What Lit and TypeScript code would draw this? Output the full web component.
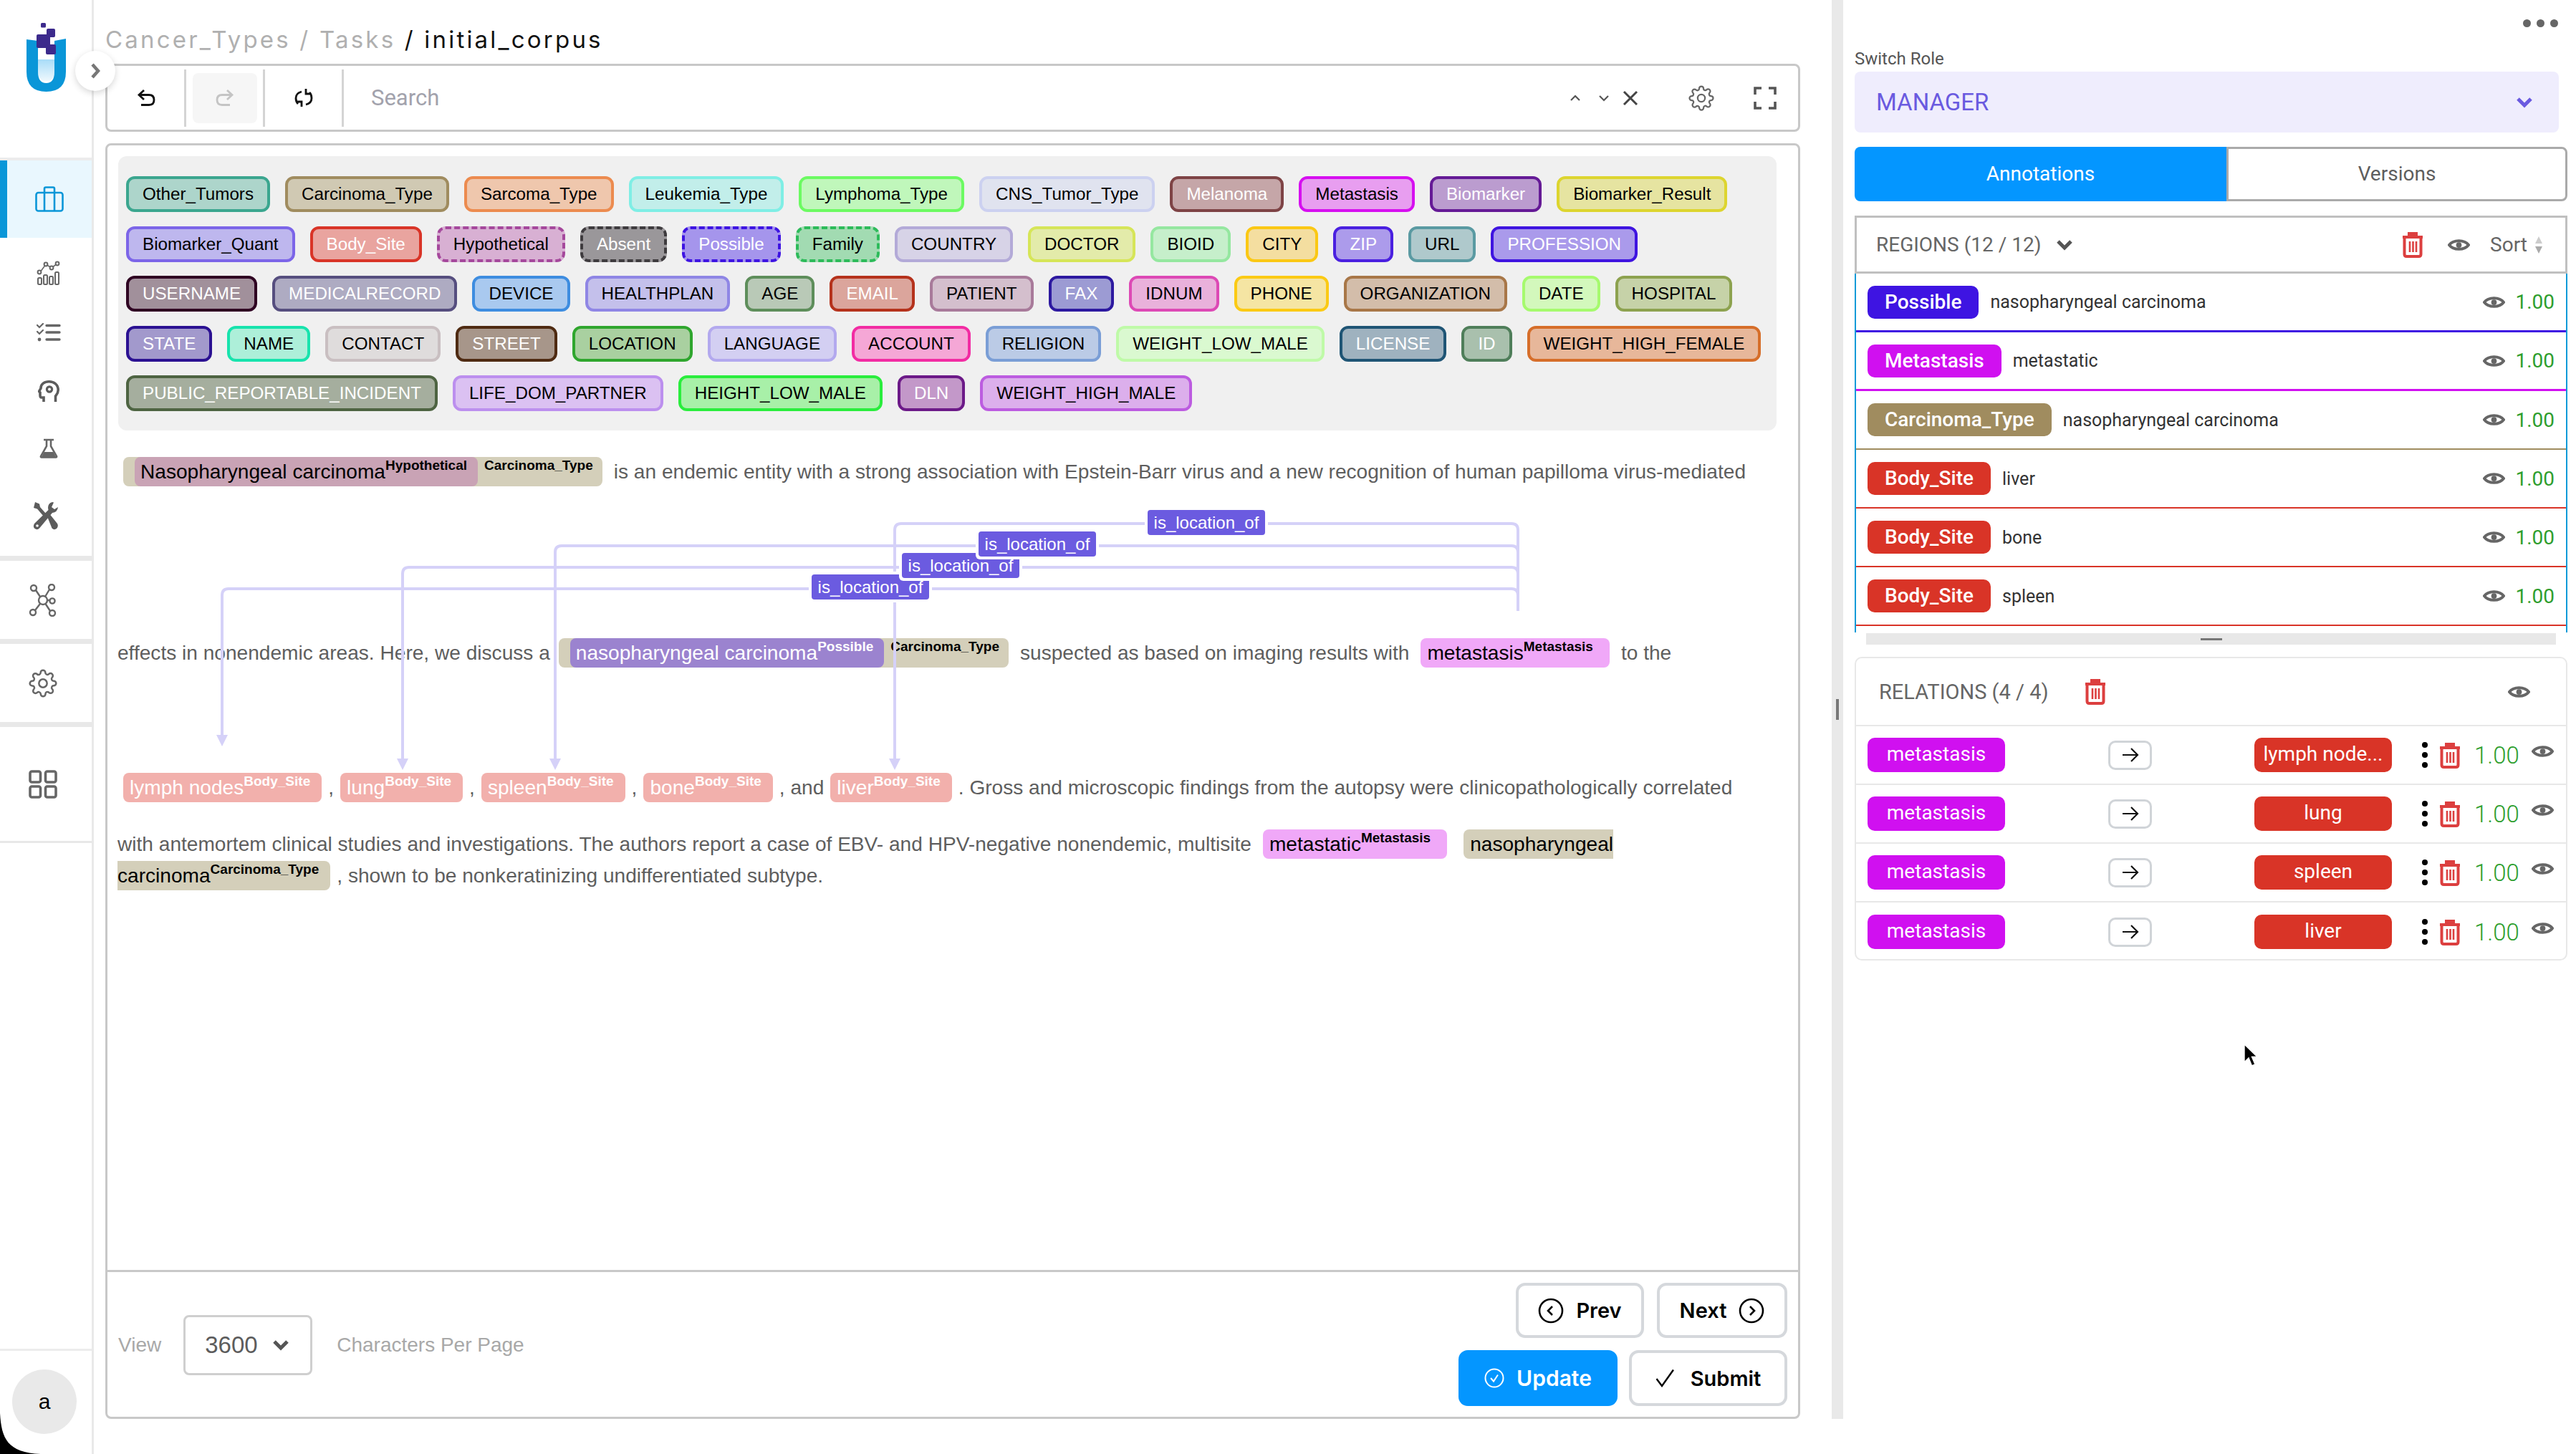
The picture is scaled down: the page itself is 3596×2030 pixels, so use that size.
import { LitElement, css, html, svg } from 'lit'
import { customElement } from 'lit/decorators.js'

// name, border, fill, text, dashed
type Lab = [string, string, string, string?, boolean?]
const W = '#fff'
const LABEL_ROWS: Lab[][] = [
  [
    ['Other_Tumors', '#3BA68F', '#ADD5CB'],
    ['Carcinoma_Type', '#A08C5F', '#D0C9B3'],
    ['Sarcoma_Type', '#EC8B4F', '#EFC7AD'],
    ['Leukemia_Type', '#7FEEE5', '#C2EEEA'],
    ['Lymphoma_Type', '#6CFA62', '#C0F7BB'],
    ['CNS_Tumor_Type', '#CCD1F0', '#E0E3EF'],
    ['Melanoma', '#7E4345', '#C5A6A8', W],
    ['Metastasis', '#D60FF0', '#E89EF0'],
    ['Biomarker', '#651A96', '#BB9CCF', W],
    ['Biomarker_Result', '#DDD52F', '#E6E4A1'],
  ],
  [
    ['Biomarker_Quant', '#7C65E8', '#BEB7EE'],
    ['Body_Site', '#D93427', '#E9A49F', W],
    ['Hypothetical', '#A5489C', '#D8B0D3', undefined, true],
    ['Absent', '#3E3B3E', '#9A979A', W, true],
    ['Possible', '#3E14E2', '#A595EC', W, true],
    ['Family', '#2DBB5A', '#A2DBB2', undefined, true],
    ['COUNTRY', '#B3AAD8', '#D7D3E7'],
    ['DOCTOR', '#D6E558', '#E3EBAA'],
    ['BIOID', '#95E7A0', '#C6EFCB'],
    ['CITY', '#FBC814', '#F4DEA0'],
    ['ZIP', '#4A20E0', '#AC9BEB', W],
    ['URL', '#5A9AA2', '#AFC9CC'],
    ['PROFESSION', '#3F14E0', '#AA9AEB', W],
  ],
  [
    ['USERNAME', '#2F0222', '#A1909B', W],
    ['MEDICALRECORD', '#564E7F', '#AEABC2', W],
    ['DEVICE', '#3E8DE0', '#A9C9EF'],
    ['HEALTHPLAN', '#8F86E5', '#C4C0EB'],
    ['AGE', '#5E8E5B', '#B9C9B7'],
    ['EMAIL', '#B5321C', '#DBA59C', W],
    ['PATIENT', '#A87A9A', '#D4BFCD'],
    ['FAX', '#2D19A0', '#9C9BD3', W],
    ['IDNUM', '#DD49B5', '#E9B1DB'],
    ['PHONE', '#FBCA14', '#F5E5A3'],
    ['ORGANIZATION', '#A87748', '#D3BDAA'],
    ['DATE', '#A6FA6E', '#D3F8BC'],
    ['HOSPITAL', '#8DA24F', '#C6D2A8'],
  ],
  [
    ['STATE', '#2B1192', '#A299CC', W],
    ['NAME', '#18E3AD', '#ADEFD9'],
    ['CONTACT', '#C9BFC1', '#DFDCDC'],
    ['STREET', '#4F2B12', '#A7968A', W],
    ['LOCATION', '#2FA62E', '#A9D0A0'],
    ['LANGUAGE', '#B3A9EE', '#D3CFF2'],
    ['ACCOUNT', '#F22CA3', '#F5A7D6'],
    ['RELIGION', '#7A9ED6', '#BBCBE6'],
    ['WEIGHT_LOW_MALE', '#BFFAA8', '#DAF9D0'],
    ['LICENSE', '#1F5575', '#9FB2BF', W],
    ['ID', '#4F7E5A', '#A9C0AD', W],
    ['WEIGHT_HIGH_FEMALE', '#D66E2A', '#E7B79A'],
  ],
  [
    ['PUBLIC_REPORTABLE_INCIDENT', '#4E6442', '#A5AE9E', W],
    ['LIFE_DOM_PARTNER', '#BC8FEE', '#DBC1F2'],
    ['HEIGHT_LOW_MALE', '#2AED3D', '#A8F0A8'],
    ['DLN', '#6C1A88', '#C398C9', W],
    ['WEIGHT_HIGH_MALE', '#BC5CE0', '#DCAFEC'],
  ],
]

const REGIONS = [
  ['Possible', 'nasopharyngeal carcinoma', '#3E14E2', 'thick'],
  ['Metastasis', 'metastatic', '#D010F0', 'thick'],
  ['Carcinoma_Type', 'nasopharyngeal carcinoma', '#A08C5F', ''],
  ['Body_Site', 'liver', '#D93427', ''],
  ['Body_Site', 'bone', '#D93427', ''],
  ['Body_Site', 'spleen', '#D93427', ''],
]
const RELATIONS = ['lymph node...', 'lung', 'spleen', 'liver']

const GEAR =
  'M19.4 15a1.65 1.65 0 0 0 .33 1.82l.06.06a2 2 0 0 1 0 2.83 2 2 0 0 1-2.83 0l-.06-.06a1.65 1.65 0 0 0-1.82-.33 1.65 1.65 0 0 0-1 1.51V21a2 2 0 0 1-2 2 2 2 0 0 1-2-2v-.09A1.65 1.65 0 0 0 9 19.4a1.65 1.65 0 0 0-1.82.33l-.06.06a2 2 0 0 1-2.83 0 2 2 0 0 1 0-2.83l.06-.06a1.65 1.65 0 0 0 .33-1.82 1.65 1.65 0 0 0-1.51-1H3a2 2 0 0 1-2-2 2 2 0 0 1 2-2h.09A1.65 1.65 0 0 0 4.6 9a1.65 1.65 0 0 0-.33-1.82l-.06-.06a2 2 0 0 1 0-2.83 2 2 0 0 1 2.83 0l.06.06a1.65 1.65 0 0 0 1.82.33H9a1.65 1.65 0 0 0 1-1.51V3a2 2 0 0 1 2-2 2 2 0 0 1 2 2v.09a1.65 1.65 0 0 0 1 1.51 1.65 1.65 0 0 0 1.82-.33l.06-.06a2 2 0 0 1 2.83 0 2 2 0 0 1 0 2.83l-.06.06a1.65 1.65 0 0 0-.33 1.82V9a1.65 1.65 0 0 0 1.51 1H21a2 2 0 0 1 2 2 2 2 0 0 1-2 2h-.09a1.65 1.65 0 0 0-1.51 1z'

const eye = () => html`<svg class="eye" viewBox="0 0 32 20">
  <path d="M2 10C8 2 24 2 30 10C24 18 8 18 2 10Z" fill="none" stroke="#666" stroke-width="4" stroke-linejoin="round" />
  <circle cx="16" cy="10" r="4" fill="#666" />
</svg>`

const trash = () => html`<svg class="trash" viewBox="0 0 30 37" fill="none" stroke="#DC3F3F" stroke-width="4">
  <path d="M1 8H29" /><path d="M10 7V3H20V7" fill="#DC3F3F" />
  <path d="M3.5 9V32Q3.5 35 6.5 35H23.5Q26.5 35 26.5 32V9" />
  <path d="M11 14V29M15.5 14V29M20 14V29" stroke-width="2.6" />
</svg>`

const chev = (cls: string, color: string) => html`<svg class=${cls} viewBox="0 0 24 16">
  <path d="M3 3L12 12L21 3" fill="none" stroke=${color} stroke-width="5" />
</svg>`

@customElement('app-root')
export class AppRoot extends LitElement {
  static styles = css`
    :host {
      display: flex;
      position: relative;
      width: 3596px;
      height: 2030px;
      overflow: hidden;
      background: #fff;
      font-family: 'Liberation Sans', Arial, sans-serif;
      color: #5e5e5e;
    }
    svg {
      display: block;
      flex: none;
    }

    /* sidebar */
    .side {
      width: 131px;
      flex: none;
      box-sizing: border-box;
      border-right: 3px solid #e9e9e9;
      display: flex;
      flex-direction: column;
    }
    .side-top {
      height: 220px;
      border-bottom: 4px solid #ececec;
      box-sizing: content-box;
    }
    .logo {
      width: 131px;
      height: 220px;
    }
    .nav {
      display: flex;
      align-items: center;
      justify-content: center;
      padding-left: 8px;
      box-sizing: border-box;
    }
    .nav.active {
      height: 108px;
      background: #e9f7fe;
      border-left: 10px solid #0a96d8;
      padding-left: 0;
      margin-bottom: 7px;
    }
    .h83 {
      height: 83px;
    }
    .h75 {
      height: 75px;
    }
    .h113 {
      height: 113px;
      padding-left: 0;
    }
    .sect {
      height: 109px;
      border-top: 7px solid #e8e8e8;
      box-sizing: content-box;
      padding: 0 8px 0 0;
    }
    .sect.last {
      height: 159px;
      border-bottom: 3px solid #e8e8e8;
    }
    .spacer {
      flex: 1;
    }
    .side-foot {
      height: 147px;
      border-top: 3px solid #ececec;
      box-sizing: border-box;
      padding: 26px 0 0 17px;
    }
    .avatar {
      width: 90px;
      height: 90px;
      border-radius: 50%;
      background: #e9e9e9;
      color: #000;
      font-size: 30px;
      display: flex;
      align-items: center;
      justify-content: center;
    }
    .collapse {
      position: absolute;
      left: 105px;
      top: 71px;
      width: 56px;
      height: 56px;
      border-radius: 50%;
      background: #fff;
      box-shadow: 0 3px 10px rgba(0, 0, 0, 0.16);
      display: flex;
      align-items: center;
      justify-content: center;
      z-index: 3;
    }

    /* main column */
    .main {
      width: 2366px;
      margin-left: 16px;
      flex: none;
      display: flex;
      flex-direction: column;
      height: 1981px;
    }
    .crumbs {
      height: 89px;
      box-sizing: border-box;
      padding-top: 36px;
      font-family: 'Inter', sans-serif;
      font-size: 33px;
      line-height: 38px;
      letter-spacing: 3.2px;
      color: #b0b0b0;
      white-space: pre;
    }
    .crumbs b {
      font-weight: 400;
      color: #111;
    }
    .toolbar {
      height: 95px;
      box-sizing: border-box;
      border: 3px solid #c8c8c8;
      border-radius: 8px;
      display: flex;
      align-items: center;
      margin-bottom: 16px;
    }
    .tool {
      width: 110px;
      height: 80px;
      box-sizing: border-box;
      border-right: 3px solid #d4d4d4;
      display: flex;
      align-items: center;
      justify-content: center;
      flex: none;
    }
    .tool span {
      width: 90px;
      height: 70px;
      border-radius: 8px;
      background: #f6f6f6;
      display: flex;
      align-items: center;
      justify-content: center;
    }
    .search {
      flex: 1;
      padding-left: 38px;
      font-family: 'Roboto', sans-serif;
      font-size: 31px;
      color: #a2a2ac;
    }
    .tb-r {
      display: flex;
      align-items: center;
      margin-right: 30px;
    }
    .ml16 {
      margin-left: 24px;
    }
    .ml12 {
      margin-left: 18px;
    }
    .ml70 {
      margin-left: 70px;
    }
    .ml50 {
      margin-left: 55px;
    }

    .panel {
      flex: 1;
      box-sizing: border-box;
      border: 3px solid #c8c8c8;
      border-radius: 8px;
      display: flex;
      flex-direction: column;
      min-height: 0;
    }
    .labels {
      margin: 15px 30px 0 15px;
      height: 383px;
      box-sizing: border-box;
      background: #f0f0f0;
      border-radius: 12px;
      padding: 28px 11px;
      display: flex;
      flex-direction: column;
      gap: 19.5px;
      flex: none;
    }
    .lrow {
      display: flex;
      gap: 21px;
    }
    .lab {
      height: 50px;
      box-sizing: border-box;
      border: 4.5px solid;
      border-radius: 12px;
      padding: 0 19px;
      font-size: 24.2px;
      line-height: 41px;
      white-space: nowrap;
      color: #000;
    }
    .lab.dash {
      border-style: dashed;
    }

    /* annotated text */
    .doc {
      flex: 1;
      position: relative;
      padding: 37px 0 0 14px;
      font-size: 28.1px;
      color: #5e5e5e;
      min-height: 0;
    }
    .line {
      display: flex;
      align-items: center;
      height: 41px;
      white-space: nowrap;
      gap: 16px;
    }
    .gap212 {
      margin-top: 212px;
    }
    .gap147 {
      margin-top: 147px;
    }
    .gap38 {
      margin-top: 38px;
    }
    .gap3 {
      margin-top: 3px;
    }
    .tight {
      gap: 9px;
    }
    .ann {
      display: inline-flex;
      height: 41px;
      border-radius: 8px;
      padding: 0 16px 0 9px;
      line-height: 41px;
      font-size: 28.1px;
      color: #000;
      flex: none;
    }
    .ann sup {
      font-size: 19px;
      font-weight: bold;
      line-height: 24px;
      vertical-align: baseline;
      display: block;
    }
    .ann.first {
      margin-left: 8px;
    }
    .hyp {
      background: #d4cfba;
      padding: 0 13px 0 16px;
    }
    .line2 {
      margin-left: -4px;
    }
    .hyp > .ann {
      margin-right: 9px;
      padding: 0 15px 0 8px;
    }
    .c-hyp {
      background: #c9a3b5;
    }
    .c-pos {
      background: #9b83cf;
      color: #fff;
    }
    .c-met {
      background: #f0a8f8;
      padding-right: 23px;
    }
    .c-body {
      background: #f2b0ac;
      color: #fff;
    }
    .c-car {
      background: #d4cfba;
    }
    .split-a {
      border-radius: 8px 0 0 8px;
      margin-left: 7px;
      padding-right: 0;
    }
    .split-b {
      border-radius: 0 8px 8px 0;
      padding-left: 0;
    }
    .arcs {
      position: absolute;
      left: 0;
      top: 0;
      width: 2360px;
      height: 600px;
      pointer-events: none;
    }
    .arcs text {
      font-size: 24px;
      fill: #fff;
      font-family: 'Liberation Sans', Arial, sans-serif;
    }

    /* footer */
    .foot {
      height: 205px;
      box-sizing: border-box;
      flex: none;
      border-top: 3px solid #c8c8c8;
      display: flex;
      justify-content: space-between;
      padding: 15px 15px 0 15px;
    }
    .view {
      display: flex;
      align-items: center;
      height: 174px;
      font-size: 28px;
      color: #a8a8a8;
    }
    .sel {
      width: 180px;
      height: 84px;
      box-sizing: border-box;
      border: 3px solid #cfcfcf;
      border-radius: 8px;
      margin: 0 34px 0 31px;
      display: flex;
      align-items: center;
      padding-left: 27px;
      font-size: 33px;
      color: #5c5c5c;
    }
    .sel svg {
      width: 24px;
      height: 16px;
      margin-left: 20px;
    }
    .actions {
      display: flex;
      flex-direction: column;
      align-items: flex-end;
      gap: 17px;
    }
    .act-row {
      display: flex;
      gap: 18px;
    }
    .act-row.low {
      gap: 16px;
    }
    .btn {
      height: 77px;
      box-sizing: border-box;
      border: 4px solid #d5d8dc;
      border-radius: 13px;
      display: flex;
      align-items: center;
      justify-content: center;
      gap: 17px;
      font-family: 'Inter', sans-serif;
      font-weight: 600;
      font-size: 29px;
      color: #000;
    }
    .btn.w-prev {
      width: 179px;
    }
    .btn.w-next {
      width: 182px;
    }
    .btn.w-upd {
      width: 222px;
      background: #0496ff;
      border: none;
      color: #fff;
      height: 78px;
      font-size: 30px;
    }
    .btn.w-sub {
      width: 221px;
      height: 78px;
      gap: 22px;
    }

    /* gutter + right panel */
    .gutter {
      width: 16px;
      height: 1981px;
      margin-left: 44px;
      background: #e9e9e9;
      flex: none;
      display: flex;
      justify-content: center;
      padding-top: 976px;
      box-sizing: border-box;
    }
    .gutter i {
      width: 4px;
      height: 29px;
      background: #777;
    }
    .right {
      width: 995px;
      margin-left: 16px;
      flex: none;
      position: relative;
      font-family: 'Roboto', sans-serif;
    }
    .dots {
      height: 64px;
      display: flex;
      justify-content: flex-end;
      align-items: center;
      gap: 8px;
      padding-right: 13px;
    }
    .dots i {
      width: 11px;
      height: 11px;
      border-radius: 50%;
      background: #666;
    }
    .role-lab {
      font-size: 24px;
      line-height: 36px;
      color: #555;
    }
    .role {
      width: 983px;
      height: 85px;
      box-sizing: border-box;
      background: #efedfd;
      border-radius: 8px;
      display: flex;
      align-items: center;
      justify-content: space-between;
      padding: 0 36px 0 30px;
      font-size: 33px;
      color: #6a5ae0;
      margin-bottom: 20px;
    }
    .role svg {
      width: 24px;
      height: 16px;
    }
    .tabs {
      display: flex;
      height: 76px;
      margin-bottom: 20px;
      font-size: 28px;
    }
    .tabs div {
      display: flex;
      align-items: center;
      justify-content: center;
      box-sizing: border-box;
      padding-bottom: 2px;
    }
    .t-on {
      width: 519px;
      background: #0496ff;
      color: #fff;
      border-radius: 8px 0 0 8px;
    }
    .t-off {
      flex: 1;
      border: 3px solid #aaa;
      border-radius: 0 8px 8px 0;
      color: #5e5e5e;
    }
    .reg-head {
      height: 81px;
      box-sizing: border-box;
      border: 3px solid #c0c0c0;
      display: flex;
      align-items: center;
      padding: 0 31px 0 27px;
      font-size: 28px;
      color: #666;
    }
    .reg-head .chv {
      width: 24px;
      height: 16px;
      margin-left: 21px;
    }
    .reg-head .grow {
      flex: 1;
    }
    .reg-head .sort {
      margin: 0 10px 0 28px;
    }
    .trash {
      width: 30px;
      height: 37px;
    }
    .eye {
      width: 31px;
      height: 20px;
    }
    .reg-head .eye {
      margin-left: 34px;
    }
    .regions {
      height: 501px;
      box-sizing: border-box;
      border-left: 2px solid #0a9ad8;
      border-right: 2px solid #0a9ad8;
      overflow: hidden;
    }
    .rrow {
      height: 82px;
      box-sizing: border-box;
      border-bottom: 2px solid;
      display: flex;
      align-items: center;
      padding: 0 16px;
      color: #333;
      font-size: 25px;
    }
    .rrow.thick {
      border-bottom-width: 3px;
    }
    .chip {
      height: 46px;
      border-radius: 10px;
      color: #fff;
      font-weight: 500;
      font-size: 28px;
      line-height: 46px;
      padding: 0 24px;
      margin-right: 16px;
    }
    .rrow .grow {
      flex: 1;
    }
    .score {
      font-size: 28px;
      color: #2e9e2e;
      font-weight: 400;
      margin-left: 14px;
    }
    .grab {
      height: 16px;
      margin: 1px 16px 17px;
      background: #e8e8e8;
      display: flex;
      align-items: center;
      justify-content: center;
    }
    .grab i {
      width: 30px;
      height: 3px;
      background: #777;
    }
    .rels {
      height: 424px;
      box-sizing: border-box;
      border: 2px solid #e8e8e8;
      border-radius: 10px;
    }
    .rels-head {
      height: 95px;
      box-sizing: border-box;
      border-bottom: 2px solid #e8e8e8;
      display: flex;
      align-items: center;
      padding: 0 50px 0 32px;
      font-size: 29px;
      color: #666;
    }
    .rels-head .trash {
      margin-left: 50px;
    }
    .rels-head .grow {
      flex: 1;
    }
    .rel {
      height: 82px;
      box-sizing: border-box;
      border-bottom: 2px solid #e8e8e8;
      display: flex;
      align-items: center;
      padding-left: 16px;
    }
    .rel:last-child {
      border-bottom: none;
    }
    .rchip {
      width: 192px;
      height: 48px;
      border-radius: 10px;
      color: #fff;
      font-size: 28px;
      line-height: 46px;
      text-align: center;
      white-space: nowrap;
      flex: none;
    }
    .arrow {
      width: 61px;
      height: 41px;
      box-sizing: border-box;
      border: 3px solid #d0d4d8;
      border-radius: 10px;
      margin: 0 143px 0 144px;
      display: flex;
      align-items: center;
      justify-content: center;
      flex: none;
    }
    .kebab {
      width: 8px;
      margin: 0 0 0 42px;
      display: flex;
      flex-direction: column;
      gap: 6px;
    }
    .kebab i {
      width: 8px;
      height: 8px;
      border-radius: 50%;
      background: #000;
    }
    .rel .trash {
      margin-left: 16px;
    }
    .rel .val {
      font-size: 33px;
      font-weight: 300;
      color: #2e9e2e;
      margin-left: 19px;
      width: 64px;
    }
    .rel .eye {
      margin: 0 0 10px 16px;
    }

    .cursor {
      position: absolute;
      left: 3131px;
      top: 1456px;
      width: 22px;
      height: 36px;
      z-index: 5;
    }
    .corner {
      position: absolute;
      left: 0;
      top: 1973px;
      width: 57px;
      height: 57px;
    }
  `

  private labelChip(l: Lab) {
    const fg = l[3] || '#000'
    return html`<span
      class="lab ${l[4] ? 'dash' : ''}"
      style="background:${l[2]};border-color:${l[1]};color:${fg}"
      >${l[0]}</span
    >`
  }

  private arcs() {
    // coordinates are page pixels, the group moves them into .doc
    const stroke = '#D5D1F8'
    const legs = [
      { y: 822, x: 310, tip: 1042 },
      { y: 792, x: 562, tip: 1075 },
      { y: 762, x: 775, tip: 1075 },
      { y: 731, x: 1249, tip: 1075 },
    ]
    const tags = [
      { x: 1133, y: 802 },
      { x: 1259, y: 772 },
      { x: 1366, y: 742 },
      { x: 1602, y: 712 },
    ]
    return html`<svg class="arcs" viewBox="0 0 2360 600">
      <g transform="translate(-150 -601)">
        ${legs.map(
          (l) => svg`
            <path d="M2119 853V${l.y + 9}Q2119 ${l.y} 2110 ${l.y}H${l.x + 9}Q${l.x} ${l.y} ${l.x} ${l.y + 9}V${l.tip - 10}"
              fill="none" stroke=${stroke} stroke-width="4" />
            <path d="M${l.x - 8} ${l.tip - 16}H${l.x + 8}L${l.x} ${l.tip}Z" fill=${stroke} />`
        )}
        ${tags.map(
          (t) => svg`
            <rect x=${t.x - 4} y=${t.y - 4} width="172" height="43" rx="6" fill="#fff" />
            <rect x=${t.x} y=${t.y} width="164" height="35" rx="4" fill="#6B5BE0" />
            <text x=${t.x + 82} y=${t.y + 26} text-anchor="middle">is_location_of</text>`
        )}
      </g>
    </svg>`
  }

  render() {
    return html`
      <aside class="side">
        <div class="side-top">
          <svg class="logo" viewBox="0 0 131 220">
            <defs>
              <linearGradient id="tube" x1="0" y1="0" x2="0" y2="1">
                <stop offset="0" stop-color="#a8dcf8" />
                <stop offset="1" stop-color="#eef8fd" />
              </linearGradient>
            </defs>
            <path d="M53 83H76V100Q76 113 64.5 113Q53 113 53 100Z" fill="url(#tube)" />
            <path
              d="M37 55L53 57V100Q53 116 64.5 116Q76 116 76 100V57L92 54V100Q92 128 64.5 128Q37 128 37 100Z"
              fill="#0A96D8"
            />
            <g fill="#3C2A8C">
              <rect x="57" y="32" width="7" height="6.5" rx="1.5" />
              <rect x="65" y="40" width="12" height="12" rx="2" />
              <rect x="51" y="48" width="19" height="19" rx="2" />
              <rect x="64" y="62" width="14" height="14" rx="2" />
            </g>
          </svg>
        </div>
        <div class="nav active">
          <svg width="40" height="36" viewBox="0 0 40 36" fill="none" stroke="#0A96D8" stroke-width="2.6">
            <rect x="1.5" y="9" width="37" height="25.5" rx="3" />
            <path d="M13 9V3.5Q13 1.5 15 1.5H25Q27 1.5 27 3.5V9M13 9V34.5M27 9V34.5" />
          </svg>
        </div>
        <div class="nav h83">
          <svg width="34" height="34" viewBox="0 0 34 34" fill="none" stroke="#666" stroke-width="2">
            <path d="M5 16L13 5L21 10L29 4" stroke-width="1.6" />
            <circle cx="4" cy="16" r="2.4" fill="#fff" /><circle cx="13" cy="5" r="2.4" fill="#fff" />
            <circle cx="21" cy="10" r="2.4" fill="#fff" /><circle cx="29" cy="4" r="2.4" fill="#fff" />
            <rect x="2" y="24" width="5" height="9" rx="1.5" /><rect x="10" y="20" width="5" height="13" rx="1.5" />
            <rect x="18" y="22" width="5" height="11" rx="1.5" /><rect x="26" y="16" width="5" height="17" rx="1.5" />
          </svg>
        </div>
        <div class="nav h83">
          <svg width="34" height="26" viewBox="0 0 34 26" fill="none" stroke="#666" stroke-width="3.4" stroke-linecap="round">
            <path d="M1 3L4 6L9 1M1 12L4 15L9 10" stroke-width="2.2" />
            <path d="M14 3.5H32M14 13H32M14 23H32" />
            <circle cx="4" cy="23" r="1.6" fill="#666" stroke-width="1.6" />
          </svg>
        </div>
        <div class="nav h83">
          <svg width="30" height="32" viewBox="0 0 30 32" fill="none" stroke="#5c5c5c" stroke-width="3.6">
            <path d="M8 30V24H5Q3 24 3 21V17L1.5 15.5L4 11C4 5 9 1.8 15.5 1.8C23 1.8 28.2 6.5 28.2 13.5C28.2 18 26 20 24.5 22V30" />
            <circle cx="16" cy="12.5" r="3.6" stroke-width="3.2" />
          </svg>
        </div>
        <div class="nav h75">
          <svg width="26" height="28" viewBox="0 0 26 28" fill="none" stroke="#666" stroke-width="2.6">
            <path d="M6 2H20M10 2V11L2 25Q1.5 26.5 3 26.5H23Q24.5 26.5 24 25L16 11V2" />
            <path d="M6.5 19H19.5L23 26H3Z" fill="#666" stroke="none" />
          </svg>
        </div>
        <div class="nav h113">
          <svg width="36" height="40" viewBox="0 0 36 40" fill="#5c5c5c">
            <path d="M3 1L9 3.5L10 8L18 17L15 21L6 10.5L1 9Z" />
            <path d="M20.5 22.5L24 18.5L34 31Q36 35 33 38Q29.5 40.5 26.5 37.5Z" />
            <path d="M27 1Q21 2.5 21 9L21.5 12L2 31Q-0.5 35.5 2.5 38Q6 40.5 9 37.5L27 16Q34 15.5 35 8L30 11L26 8L29 1.5Z" />
            <circle cx="6" cy="34" r="1.8" fill="#fff" />
          </svg>
        </div>
        <div class="nav sect">
          <svg width="40" height="46" viewBox="0 0 40 46" fill="none" stroke="#666" stroke-width="2.4">
            <circle cx="20" cy="23" r="6" /><circle cx="7" cy="6" r="4" /><circle cx="32" cy="5" r="4" />
            <circle cx="6" cy="40" r="4" /><circle cx="33" cy="24" r="3.6" /><circle cx="33" cy="41" r="4" />
            <path d="M10 9L16 18M29 8L23 18M9 37L16 28M26 23H29.5M23.5 28L30 38" />
          </svg>
        </div>
        <div class="nav sect">
          <svg width="40" height="40" viewBox="0 0 24 24" fill="none" stroke="#666" stroke-width="1.5">
            <circle cx="12" cy="12" r="3.4" /><path d=${GEAR} />
          </svg>
        </div>
        <div class="nav sect last">
          <svg width="40" height="40" viewBox="0 0 40 40" fill="none" stroke="#666" stroke-width="3.6">
            <rect x="2" y="2" width="14.5" height="15" rx="2.5" /><rect x="23.5" y="2" width="14.5" height="15" rx="2.5" />
            <rect x="2" y="23" width="14.5" height="15" rx="2.5" /><rect x="23.5" y="23" width="14.5" height="15" rx="2.5" />
          </svg>
        </div>
        <div class="spacer"></div>
        <div class="side-foot"><div class="avatar">a</div></div>
      </aside>
      <div class="collapse">
        <svg width="14" height="24" viewBox="0 0 14 24">
          <path d="M3 3L11 12L3 21" fill="none" stroke="#777" stroke-width="4.5" />
        </svg>
      </div>

      <main class="main">
        <div class="crumbs">Cancer_Types / Tasks <b>/ initial_corpus</b></div>
        <div class="toolbar">
          <div class="tool">
            <svg width="26" height="24" viewBox="0 0 26 24" fill="none" stroke="#111" stroke-width="2.8">
              <path d="M10 1L3 7.5L10 14" /><path d="M3 7.5H17Q24 7.5 24 14.5Q24 21.5 17 21.5H6" />
            </svg>
          </div>
          <div class="tool">
            <span>
              <svg width="26" height="24" viewBox="0 0 26 24" fill="none" stroke="#c4c4c4" stroke-width="2.8">
                <path d="M16 1L23 7.5L16 14" /><path d="M23 7.5H9Q2 7.5 2 14.5Q2 21.5 9 21.5H20" />
              </svg>
            </span>
          </div>
          <div class="tool">
            <svg width="28" height="26" viewBox="0 0 28 26" fill="none" stroke="#111" stroke-width="2.8">
              <path d="M11 4Q3 6 3 13Q3 18 6 21" /><path d="M17 22Q25 20 25 13Q25 8 22 5" />
              <path d="M17 1V8H24" transform="translate(0 -1)" /><path d="M11 25V18H4" />
            </svg>
          </div>
          <div class="search">Search</div>
          <div class="tb-r">
            <svg width="16" height="10" viewBox="0 0 16 10"><path d="M2 8L8 2L14 8" fill="none" stroke="#555" stroke-width="2.2" /></svg>
            <svg class="ml16" width="16" height="10" viewBox="0 0 16 10"><path d="M2 2L8 8L14 2" fill="none" stroke="#555" stroke-width="2.2" /></svg>
            <svg class="ml12" width="22" height="22" viewBox="0 0 22 22"><path d="M2 2L20 20M20 2L2 20" stroke="#444" stroke-width="3" /></svg>
            <svg class="ml70" width="36" height="36" viewBox="0 0 24 24" fill="none" stroke="#666" stroke-width="1.5">
              <circle cx="12" cy="12" r="3.4" /><path d=${GEAR} />
            </svg>
            <svg class="ml50" width="32" height="32" viewBox="0 0 32 32" fill="none" stroke="#555" stroke-width="3.6">
              <path d="M2 11V2H11M21 2H30V11M2 21V30H11M21 30H30V21" />
            </svg>
          </div>
        </div>

        <section class="panel">
          <div class="labels">
            ${LABEL_ROWS.map((r) => html`<div class="lrow">${r.map((l) => this.labelChip(l))}</div>`)}
          </div>
          <div class="doc">
            <div class="line">
              <span class="ann hyp first c-car">
                <span class="ann c-hyp">Nasopharyngeal carcinoma<sup>Hypothetical</sup></span>
                <sup>Carcinoma_Type</sup>
              </span>
              <span>is an endemic entity with a strong association with Epstein-Barr virus and a new recognition of human papilloma virus-mediated</span>
            </div>
            <div class="line gap212">
              <span>effects in nonendemic areas. Here, we discuss a</span>
              <span class="ann hyp line2 c-car">
                <span class="ann c-pos">nasopharyngeal carcinoma<sup>Possible</sup></span>
                <sup>Carcinoma_Type</sup>
              </span>
              <span>suspected as based on imaging results with</span>
              <span class="ann c-met">metastasis<sup>Metastasis</sup></span>
              <span>to the</span>
            </div>
            <div class="line tight gap147">
              <span class="ann first c-body">lymph nodes<sup>Body_Site</sup></span><span>,</span>
              <span class="ann c-body">lung<sup>Body_Site</sup></span><span>,</span>
              <span class="ann c-body">spleen<sup>Body_Site</sup></span><span>,</span>
              <span class="ann c-body">bone<sup>Body_Site</sup></span><span>, and</span>
              <span class="ann c-body">liver<sup>Body_Site</sup></span>
              <span>. Gross and microscopic findings from the autopsy were clinicopathologically correlated</span>
            </div>
            <div class="line gap38">
              <span>with antemortem clinical studies and investigations. The authors report a case of EBV- and HPV-negative nonendemic, multisite</span>
              <span class="ann c-met">metastatic<sup>Metastasis</sup></span>
              <span class="ann split-a c-car">nasopharyngeal</span>
            </div>
            <div class="line tight gap3">
              <span class="ann split-b c-car">carcinoma<sup>Carcinoma_Type</sup></span>
              <span>, shown to be nonkeratinizing undifferentiated subtype.</span>
            </div>
            ${this.arcs()}
          </div>
          <div class="foot">
            <div class="view">
              <span>View</span>
              <div class="sel">3600 ${chev('', '#555')}</div>
              <span>Characters Per Page</span>
            </div>
            <div class="actions">
              <div class="act-row">
                <div class="btn w-prev">
                  <svg width="36" height="36" viewBox="0 0 36 36" fill="none" stroke="#000" stroke-width="2.6">
                    <circle cx="18" cy="18" r="16" /><path d="M20 12L14 18L20 24" />
                  </svg>
                  Prev
                </div>
                <div class="btn w-next">
                  Next
                  <svg width="36" height="36" viewBox="0 0 36 36" fill="none" stroke="#000" stroke-width="2.6">
                    <circle cx="18" cy="18" r="16" /><path d="M16 12L22 18L16 24" />
                  </svg>
                </div>
              </div>
              <div class="act-row low">
                <div class="btn w-upd">
                  <svg width="28" height="28" viewBox="0 0 28 28" fill="none" stroke="#fff" stroke-width="2">
                    <circle cx="14" cy="14" r="12.5" /><path d="M9 14L13 18.5L19 9.5" />
                  </svg>
                  Update
                </div>
                <div class="btn w-sub">
                  <svg width="27" height="26" viewBox="0 0 27 26" fill="none" stroke="#000" stroke-width="2.4">
                    <path d="M1.5 14L9 24L25 1.5" />
                  </svg>
                  Submit
                </div>
              </div>
            </div>
          </div>
        </section>
      </main>

      <div class="gutter"><i></i></div>

      <aside class="right">
        <div class="dots"><i></i><i></i><i></i></div>
        <div class="role-lab">Switch Role</div>
        <div class="role">MANAGER ${chev('', '#6A5AE0')}</div>
        <div class="tabs">
          <div class="t-on">Annotations</div>
          <div class="t-off">Versions</div>
        </div>
        <div class="reg-head">
          REGIONS (12 / 12) ${chev('chv', '#555')}
          <span class="grow"></span>
          ${trash()} ${eye()}
          <span class="sort">Sort</span>
          <svg width="12" height="26" viewBox="0 0 12 26">
            <path d="M6 1L11 11H1Z" fill="#ccc" /><path d="M1 15H11L6 25Z" fill="#aaa" />
          </svg>
        </div>
        <div class="regions">
          ${REGIONS.map(
            (r) => html`<div class="rrow ${r[3]}" style="border-bottom-color:${r[2]}">
              <span class="chip" style="background:${r[2]}">${r[0]}</span>
              <span class="grow">${r[1]}</span>
              ${eye()}
              <span class="score">1.00</span>
            </div>`
          )}
        </div>
        <div class="grab"><i></i></div>
        <div class="rels">
          <div class="rels-head">
            RELATIONS (4 / 4) ${trash()}
            <span class="grow"></span>
            ${eye()}
          </div>
          ${RELATIONS.map(
            (r) => html`<div class="rel">
              <span class="rchip" style="background:#D010F0">metastasis</span>
              <span class="arrow">
                <svg width="24" height="22" viewBox="0 0 24 22" fill="none" stroke="#111" stroke-width="2.2">
                  <path d="M1 11H22M13 2L22 11L13 20" />
                </svg>
              </span>
              <span class="rchip" style="background:#D93427">${r}</span>
              <span class="kebab"><i></i><i></i><i></i></span>
              ${trash()}
              <span class="val">1.00</span>
              ${eye()}
            </div>`
          )}
        </div>
      </aside>

      <svg class="cursor" viewBox="0 0 22 36">
        <path d="M2 2V27L8 21L12.5 32L17 30L12.5 19.5H20Z" fill="#000" stroke="#fff" stroke-width="1.4" />
      </svg>
      <svg class="corner" viewBox="0 0 57 57"><path d="M0 0C2 35 10 55 57 57H0Z" fill="#000" /></svg>
    `
  }
}
